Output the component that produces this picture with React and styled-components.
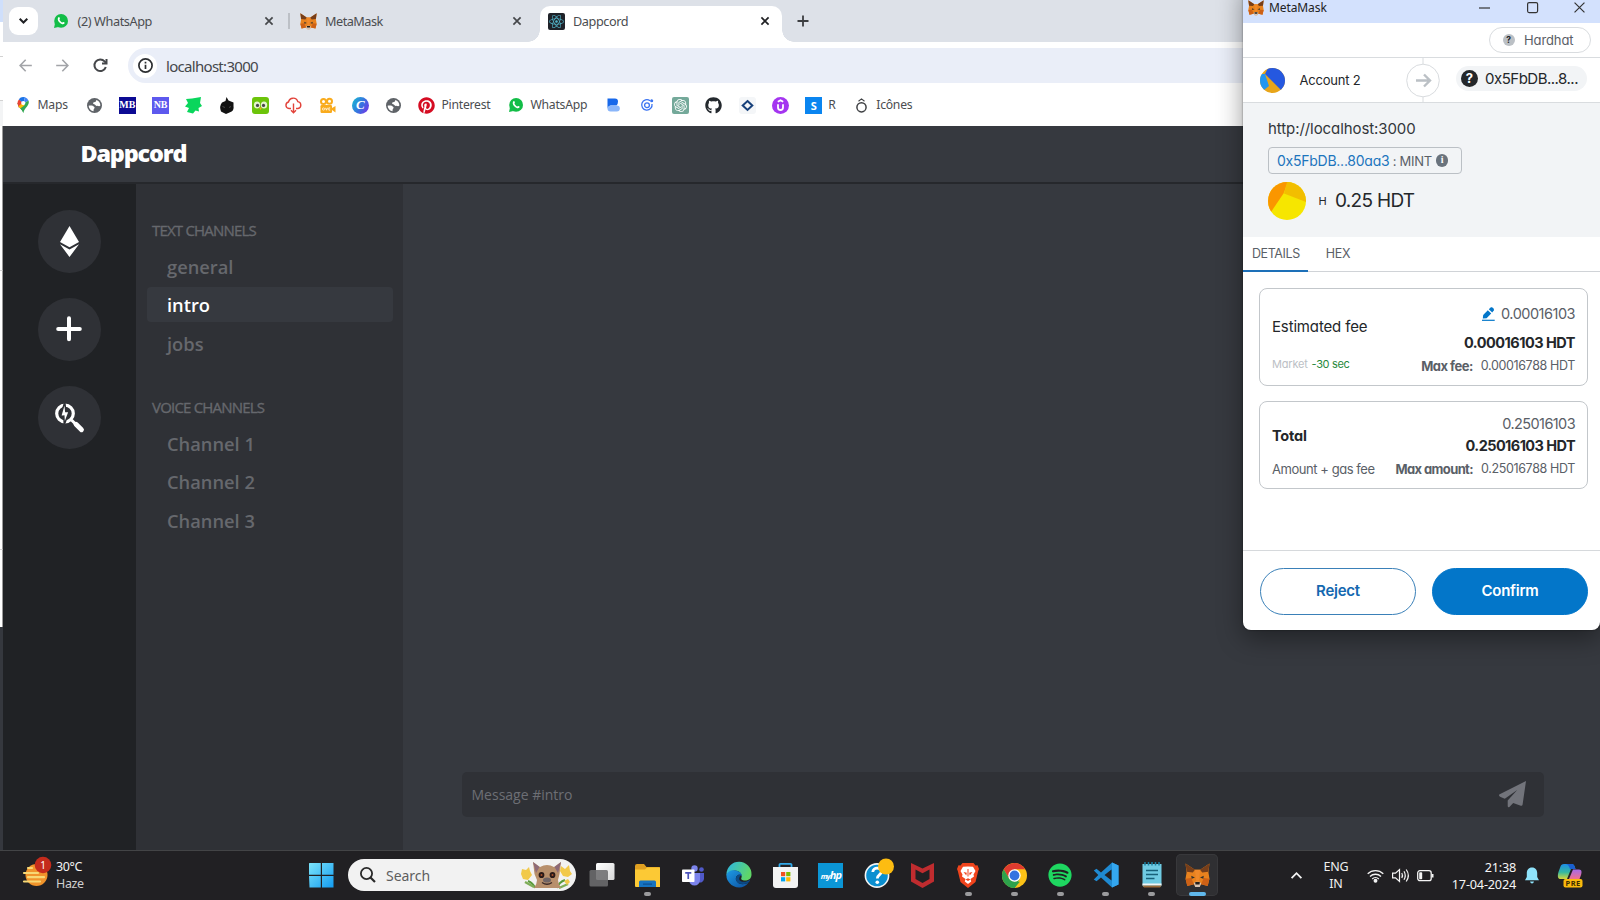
import React from "react";
import styled, { createGlobalStyle, css } from "styled-components";
import { FaPinterest, FaGithub, FaReact, FaSpotify } from "react-icons/fa";
import { SiOpenai } from "react-icons/si";

const segoe = '"Noto Sans", "Open Sans", sans-serif';
const euclid = 'Inter, "Liberation Sans", sans-serif';

const GlobalStyle = createGlobalStyle`
  *, *::before, *::after { box-sizing: border-box; }
  html, body { margin: 0; padding: 0; background: #202023; overflow: hidden; }
  svg { display: block; flex: none; overflow: visible; }
`;

const Desktop = styled.div`
  position: relative;
  width: 1600px;
  height: 900px;
  display: flex;
  flex-direction: column;
  overflow: hidden;
  font-family: ${segoe};
`;

const Workspace = styled.div`
  height: 851px;
  display: flex;
  border-bottom: 1px solid #434446;
`;

const BackWindow = styled.div`
  width: 3px;
  display: flex;
  flex-direction: column;
  background: #35383e;
`;

const BackSlice = styled.div`
  height: ${(p) => p.$h}px;
  background: ${(p) => p.$bg || "#fff"};
  border-bottom: ${(p) => (p.$line ? "1px solid #d2d2d2" : "0")};
  border-right: ${(p) => (p.$edge ? "1px solid #9a9a9a" : "0")};
`;

const Browser = styled.div`
  flex: 1;
  min-width: 0;
  display: flex;
  flex-direction: column;
  background: #fff;
`;

const Text = styled.span`
  white-space: pre;
  font-family: ${(p) => p.$font || "inherit"};
  font-size: ${(p) => p.$size || 13}px;
  font-weight: ${(p) => p.$weight || 400};
  letter-spacing: ${(p) => p.$ls || 0}px;
  line-height: ${(p) => p.$lh || 20}px;
  color: ${(p) => p.$color || "#4b4d50"};
`;

/* ---------- tab strip ---------- */

const TabStrip = styled.div`
  height: 42px;
  display: flex;
  background: #dde1e8;
`;

const TabSearch = styled.div`
  width: 29px;
  height: 28px;
  margin: 7px 0 0 6px;
  border-radius: 9px;
  background: #fff;
  display: flex;
  align-items: center;
  justify-content: center;
`;

const Tab = styled.div`
  width: ${(p) => p.$w}px;
  height: 36px;
  margin: 6px 0 0 ${(p) => p.$ml || 0}px;
  padding: 0 ${(p) => p.$pr}px 6px ${(p) => p.$pl}px;
  display: flex;
  align-items: center;
  gap: ${(p) => p.$gap || 8}px;
  position: relative;
  ${(p) =>
    p.$active &&
    css`
      background: #fff;
      border-radius: 10px 10px 0 0;
      &::before, &::after {
        content: "";
        position: absolute;
        bottom: 0;
        width: 12px;
        height: 12px;
      }
      &::before { left: -12px; background: radial-gradient(circle at 0 0, transparent 11.5px, #fff 12px); }
      &::after { right: -12px; background: radial-gradient(circle at 100% 0, transparent 11.5px, #fff 12px); }
    `}
`;

const TabTitle = styled(Text)`
  flex: 1;
`;

const TabDivider = styled.div`
  width: 2px;
  height: 16px;
  margin-top: 13px;
  background: #bcc0c6;
`;

const NewTab = styled.div`
  margin: 15px 0 0 15px;
`;

/* ---------- toolbar ---------- */

const Toolbar = styled.div`
  height: 46px;
  display: flex;
  align-items: flex-start;
  padding: 6px 0 0 16px;
`;

const NavButtons = styled.div`
  width: 109px;
  height: 35px;
  display: flex;
  align-items: center;
  gap: 24px;
`;

const Omnibox = styled.div`
  flex: 1;
  height: 35px;
  border-radius: 17.5px 0 0 17.5px;
  background: #eaeef8;
  display: flex;
  align-items: center;
  gap: 9px;
  padding-left: 5px;
`;

const SiteInfo = styled.div`
  width: 24px;
  height: 24px;
  border-radius: 50%;
  background: #fff;
  display: flex;
  align-items: center;
  justify-content: center;
`;

const Bookmarks = styled.div`
  height: 38px;
  display: flex;
  align-items: center;
  padding: 0 0 4px 11.5px;
`;

const Bookmark = styled.div`
  width: ${(p) => p.$w || 33.3}px;
  display: flex;
  align-items: center;
  gap: 6px;
`;

const BookmarkIcon = styled.div`
  width: 17px;
  height: 17px;
  flex: none;
  display: flex;
  align-items: center;
  justify-content: center;
`;

const Favicon = styled.div`
  width: 17px;
  height: 17px;
  border-radius: ${(p) => p.$r || 0}px;
  background: ${(p) => p.$bg};
  color: #fff;
  display: flex;
  align-items: center;
  justify-content: center;
  font: ${(p) => p.$font || `700 11px/17px ${segoe}`};
`;

/* ---------- chat app ---------- */

const ChatApp = styled.div`
  flex: 1;
  display: flex;
  flex-direction: column;
  background: #36393f;
`;

const ChatHeader = styled.div`
  height: 58px;
  padding: 10px 0 0 77.5px;
  border-bottom: 2px solid #26282c;
`;

const ChatBody = styled.div`
  flex: 1;
  display: flex;
`;

const Servers = styled.div`
  width: 133px;
  background: #202225;
  display: flex;
  flex-direction: column;
  align-items: center;
  gap: 25.4px;
  padding: 25.5px 0 0;
`;

const Server = styled.div`
  width: 63px;
  height: 63px;
  padding-right: 1px;
  border-radius: 50%;
  background: #2f3136;
  display: flex;
  align-items: center;
  justify-content: center;
`;

const Channels = styled.div`
  width: 267px;
  background: #2f3136;
  padding: 35.5px 10px 0 11px;
`;

const ChannelHeading = styled.div`
  height: 20px;
  padding-left: 5px;
  font: 400 15px/20px "Open Sans", sans-serif;
  letter-spacing: -0.8px;
  -webkit-text-stroke: 0.35px #66686d;
  color: #66686d;
  white-space: nowrap;
`;

const ChannelList = styled.div`
  display: flex;
  flex-direction: column;
  gap: 3.5px;
  margin: 9px 0 36px;
`;

const Channel = styled.div`
  height: 35px;
  padding-left: 20px;
  border-radius: 4px;
  background: ${(p) => (p.$active ? "#36393f" : "transparent")};
  color: ${(p) => (p.$active ? "#fff" : "#66686d")};
  font: 600 18.3px/36px "Open Sans", sans-serif;
`;

const Conversation = styled.div`
  flex: 1;
  display: flex;
  align-items: flex-end;
  padding: 0 56px 33px 59px;
`;

const MessageBox = styled.div`
  flex: 1;
  height: 45px;
  border-radius: 5px;
  background: #2f3136;
  display: flex;
  align-items: center;
  justify-content: space-between;
  padding: 0 18px 0 9.5px;
`;

/* ---------- wallet window ---------- */

const WalletShadow = styled.div`
  position: absolute;
  left: 1243px;
  top: -20px;
  width: 357px;
  height: 650px;
  border-radius: 8px;
  box-shadow: 0 8px 26px rgba(0, 0, 0, 0.4), 0 0 2px rgba(0, 0, 0, 0.5);
`;

const Wallet = styled.div`
  position: absolute;
  left: 1243px;
  top: 0;
  width: 357px;
  height: 630px;
  background: #fff;
  border-radius: 0 0 8px 8px;
  overflow: hidden;
  display: flex;
  flex-direction: column;
  font-family: ${euclid};
  font-feature-settings: "cv11";
`;

const WalletTitleBar = styled.div`
  height: 23px;
  background: #d3e1fd;
  display: flex;
  align-items: center;
  padding: 0 15px 8px 5px;
`;

const WalletTitle = styled(Text)`
  flex: 1;
  padding-left: 5px;
`;

const WindowButtons = styled.div`
  display: flex;
  align-items: center;
  gap: 36.5px;
`;

const NetworkRow = styled.div`
  height: 35px;
  border-bottom: 1px solid #d9dcdf;
  display: flex;
  justify-content: flex-end;
  padding: 4px 9px 0 0;
`;

const NetworkPill = styled.div`
  width: 102px;
  height: 26px;
  border: 1px solid #d9dcdf;
  border-radius: 13px;
  display: flex;
  align-items: center;
  gap: 9px;
  padding-left: 12.5px;
`;

const Question = styled.div`
  width: ${(p) => p.$s}px;
  height: ${(p) => p.$s}px;
  flex: none;
  border-radius: 50%;
  background: ${(p) => p.$bg};
  color: ${(p) => p.$fg};
  font: 700 ${(p) => p.$s - 4}px/${(p) => p.$s}px ${euclid};
  text-align: center;
`;

const AccountRow = styled.div`
  height: 45px;
  border-bottom: 1px solid #d9dcdf;
  display: flex;
  align-items: center;
  padding: 0 13px 0 17px;
`;

const AccountName = styled(Text)`
  width: 121.5px;
  padding-left: 14.5px;
`;

const RecipientPill = styled.div`
  width: 131px;
  height: 25px;
  flex: none;
  margin: 0 0 3px 16px;
  border-radius: 13px;
  background: #f2f4f6;
  display: flex;
  align-items: center;
  gap: 7px;
  padding-left: 5px;
`;

const Summary = styled.div`
  height: 134px;
  background: #f2f4f6;
  padding: 15px 0 0 25px;
`;

const Origin = styled.div`
  height: 29px;
`;

const ContractTag = styled.div`
  width: 194px;
  height: 27px;
  border: 1px solid #bbc0c5;
  border-radius: 4px;
  display: flex;
  align-items: center;
  padding-left: 8px;
`;

const InfoDot = styled.div`
  width: 12.5px;
  height: 12.5px;
  margin-left: 4px;
  border-radius: 50%;
  background: #6a737d;
  color: #fff;
  font: 700 10px/12.5px "Liberation Serif", serif;
  text-align: center;
`;

const Amount = styled.div`
  display: flex;
  align-items: center;
  margin-top: 8px;
`;

const TokenSymbol = styled(Text)`
  width: 29px;
  padding-left: 12.5px;
`;

const WalletTabs = styled.div`
  height: 35px;
  border-bottom: 1px solid #d0d3d7;
  display: flex;
`;

const WalletTab = styled.div`
  height: 35px;
  padding: 5px 8px 0 9px;
  margin-right: 9px;
  border-bottom: ${(p) => (p.$active ? "2px solid #1d70b8" : "0")};
`;

const Details = styled.div`
  height: 279px;
  padding: 15.5px 12px 0 16px;
  display: flex;
  flex-direction: column;
  gap: 15px;
  border-bottom: 1px solid #d6d9dc;
`;

const Card = styled.div`
  height: ${(p) => p.$h}px;
  border: 1px solid #c3c7cb;
  border-radius: 8px;
  padding: ${(p) => p.$top}px 12px 0;
  display: flex;
  justify-content: space-between;
`;

const CardColumn = styled.div`
  display: flex;
  flex-direction: column;
  align-items: ${(p) => (p.$end ? "flex-end" : "flex-start")};
  padding-top: ${(p) => p.$top || 0}px;
`;

const Line = styled.div`
  height: 20px;
  margin-top: ${(p) => p.$mt || 0}px;
  display: flex;
  align-items: center;
  gap: ${(p) => p.$gap || 0}px;
`;

const Actions = styled.div`
  flex: 1;
  display: flex;
  gap: 16px;
  padding: 16.5px 12px 0 17px;
`;

const Action = styled.div`
  flex: 1;
  height: 47px;
  border-radius: 24px;
  border: 1px solid ${(p) => (p.$primary ? "#0376c9" : "#3a80b8")};
  background: ${(p) => (p.$primary ? "#0376c9" : "#fff")};
  color: ${(p) => (p.$primary ? "#fff" : "#1468b0")};
  font: 600 15px/43px ${euclid};
  letter-spacing: -0.25px;
  text-align: center;
`;

/* ---------- taskbar ---------- */

const Taskbar = styled.div`
  height: 49px;
  background: #212023;
  display: flex;
  align-items: flex-start;
`;

const Weather = styled.div`
  width: 309px;
  height: 49px;
  display: flex;
  padding: 6px 0 0 23px;
  gap: 6px;
`;

const WeatherText = styled.div`
  display: flex;
  flex-direction: column;
  padding-top: 0.5px;
`;

const StartButton = styled.div`
  width: 39px;
  padding-top: 12px;
`;

const SearchBox = styled.div`
  width: 228px;
  height: 32px;
  margin: 8px 3px 0 0;
  border-radius: 16px;
  background: #f2f2f2;
  display: flex;
  align-items: center;
  padding: 0 4px 0 12px;
`;

const SearchLabel = styled(Text)`
  flex: 1;
  padding: 1px 0 0 10px;
`;

const Apps = styled.div`
  width: 647px;
  display: flex;
`;

const AppButton = styled.div`
  width: 42px;
  height: 42px;
  flex: none;
  margin: 3px 1.92px;
  border-radius: 5px;
  background: ${(p) => (p.$active ? "#2f2f32" : "transparent")};
  box-shadow: ${(p) => (p.$active ? "inset 0 0 0 1px #38383b" : "none")};
  display: flex;
  flex-direction: column;
  align-items: center;
  padding-top: 8px;
  gap: 4px;
`;

const AppIcon = styled.div`
  width: 26px;
  height: 26px;
  display: flex;
  align-items: center;
  justify-content: center;
`;

const Running = styled.div`
  width: ${(p) => (p.$active ? 17 : 7)}px;
  height: 3.5px;
  border-radius: 2px;
  background: ${(p) => (p.$active ? "#60b8ec" : "#9b9b9d")};
`;

const HpTile = styled.div`
  width: 25px;
  height: 25px;
  background: #0b96d6;
  color: #fff;
  font: italic 700 11px/24px "Open Sans", sans-serif;
  letter-spacing: -0.8px;
  text-align: center;
  small { font-size: 7.5px; }
`;

const Tray = styled.div`
  flex: 1;
  height: 49px;
  display: flex;
  align-items: center;
  padding-left: 58px;
`;

const TrayCell = styled.div`
  width: ${(p) => p.$w}px;
  flex: none;
  display: flex;
  flex-direction: column;
  align-items: ${(p) => p.$align || "center"};
`;

/* ---------- drawings ---------- */

const Svg = ({ w, h = w, box, children, ...rest }) => (
  <svg width={w} height={h} viewBox={box || `0 0 ${w} ${h}`} fill="none" {...rest}>
    {children}
  </svg>
);

const Fox = ({ s }) => (
  <Svg w={s} box="0 0 24 24">
    <path d="M0.5 0.5 9.5 6.5H14.5L23.5 0.5 22.5 9 23.5 15 21.8 22 15.5 20.5 13.5 23H10.5L8.5 20.5 2.2 22 0.5 15 1.5 9Z" fill="#e8821e" />
    <path d="M0.5 0.5 9.5 6.5 7.5 9 1.6 8.5ZM23.5 0.5 14.5 6.5 16.5 9 22.4 8.5Z" fill="#763e1a" />
    <path d="M0.5 15 6 14.5 8.5 20.5 2.2 22ZM23.5 15 18 14.5 15.5 20.5 21.8 22Z" fill="#cd6116" />
    <path d="M9.5 6.5H14.5L13.3 17H10.7Z" fill="#f0892a" />
    <path d="M6 12.3 9.6 14 6.4 15ZM18 12.3 14.4 14 17.6 15Z" fill="#33312f" />
    <path d="M8.5 19.5 10.3 18H13.7L15.5 19.5 14.2 23H9.8Z" fill="#d8c5b5" />
    <path d="M9.8 18.2H14.2L14 20.6H10Z" fill="#241f1c" />
  </Svg>
);

const Close = ({ s = 8, c = "#45474a", sw = 1.7 }) => (
  <Svg w={s} box="0 0 10 10" stroke={c} strokeWidth={(sw * 10) / s}>
    <path d="M0.5 0.5 9.5 9.5M9.5 0.5 0.5 9.5" />
  </Svg>
);

const WhatsAppMark = () => (
  <Svg w={14}>
    <circle cx="7.1" cy="6.9" r="6.9" fill="#12bd47" />
    <path d="M0 14 1 9.5 4.5 13Z" fill="#12bd47" />
    <path d="M4.3 3.4C5 2.7 5.5 3.2 5.9 4.5 6 5 5.3 5.3 5.5 5.8 6 6.9 7 7.9 8.1 8.4 8.6 8.6 8.9 7.8 9.3 8 10.7 8.5 11 8.9 10.4 9.6 9.4 10.8 7.3 10.3 5.5 8.5 3.7 6.8 3.2 4.6 4.3 3.4Z" fill="#fff" />
  </Svg>
);

const Globe = () => (
  <Svg w={15} box="0 0 16 16">
    <circle cx="8" cy="8" r="8" fill="#5f6368" />
    <path d="M1.7 8.3C4 7.8 6.5 8 8 9.8 8.6 11 7 11.5 7 12.7V14.2C4.3 13.9 1.9 11.5 1.7 8.3ZM9.8 2C12.6 2.7 14.3 5.2 14.3 8 12.9 9.6 12.2 8.3 10.6 8.4 9 8.2 9.3 7 7.7 6.6 5.6 6.2 6.5 4.5 8.3 4.3 9.5 4 9.8 3.3 9.8 2Z" fill="#fff" />
  </Svg>
);

const MapsPin = () => (
  <Svg w={12.5} h={16} box="0 0 14 18">
    <path d="M7 18C6.2 14 1 12 0.5 6.8L7 7Z" fill="#34a853" />
    <path d="M0.5 7A6.5 6.5 0 0 1 2.3 2.4L7 6.5 2 12Z" fill="#ea4335" />
    <path d="M2 2.6A6.5 6.5 0 0 1 9 0.4L7 7Z" fill="#1a73e8" />
    <path d="M9 0.4A6.5 6.5 0 0 1 12.9 4L7 8Z" fill="#4285f4" />
    <path d="M12.9 4C15 9 8.5 12 7 18 6.5 15.5 5 14.5 3.5 12.4L9 6.5Z" fill="#34a853" />
    <path d="M1.5 10.5 5 7.5 8.8 9 3.7 13Z" fill="#fbbc04" />
    <circle cx="7" cy="6.8" r="2.4" fill="#fff" />
  </Svg>
);

const GreenLeaf = () => (
  <Svg w={17}>
    <path d="M1 2 7 1.5 16 0 15 6 17 9 13.5 11 14 14.5 10.5 13.5 8 16.5 2 15 4 11 0 9.5 3 6Z" fill="#09d65c" />
  </Svg>
);

const BlackCat = () => (
  <Svg w={14} h={17}>
    <path d="M6.5 0 8.5 3.5 13.5 5.5V9Q14.5 14 9.5 15.5L6 17 1 14.5Q-1 9 2 5.5L5.5 4Z" fill="#121212" />
    <path d="M2.5 9.5 5 10.5M9 10.5 11 9.5" stroke="#555" strokeWidth="0.8" />
  </Svg>
);

const DuoOwl = () => (
  <Svg w={17}>
    <rect width="17" height="17" rx="3" fill="#6cc40a" />
    <ellipse cx="5" cy="8" rx="3.2" ry="3.6" fill="#e4f4cc" />
    <ellipse cx="12" cy="8" rx="3.2" ry="3.6" fill="#e4f4cc" />
    <circle cx="5.5" cy="8.4" r="1.6" fill="#47474b" />
    <circle cx="11.5" cy="8.4" r="1.6" fill="#47474b" />
    <path d="M7 10.5H10L8.5 13Z" fill="#f5a623" />
  </Svg>
);

const CloudDown = () => (
  <Svg w={17} stroke="#e2433a" strokeWidth="1.4">
    <path d="M6 11.5H4A3.3 3.3 0 0 1 3.5 5 4.8 4.8 0 0 1 12.8 4.600 3.5 3.500 0 0 1 13 11.5H11M8.500 6.500V15.500M6 13.200 8.500 15.700 11 13.200" />
  </Svg>
);

const Camera = () => (
  <Svg w={17}>
    <circle cx="4.5" cy="4.600" r="2.500" stroke="#f9ab1d" strokeWidth="2" />
    <circle cx="10.500" cy="4.200" r="2.500" stroke="#f9ab1d" strokeWidth="2" />
    <rect x="1.500" y="8" width="11.500" height="8" rx="1.200" fill="#f9ab1d" />
    <path d="M13 11 16.500 9V15.500L13 13Z" fill="#f9ab1d" />
    <circle cx="4.500" cy="12" r="1.100" stroke="#fff" strokeWidth="0.700" />
    <path d="M6.500 10.800 7.500 13.200 8.500 10.800M11.200 10.900H9.800V13.100H11.200" stroke="#fff" strokeWidth="0.800" />
  </Svg>
);

const BlueLetter = () => (
  <Svg w={13} h={14}>
    <path d="M0.500 0.500H8A3 3 0 0 1 11 3.500Q11 6 9.500 7.500H4Q1.500 7.500 0.500 10.500Z" fill="#1768ea" />
    <path d="M0.500 10.500Q1.500 7.500 4 7.500H9.800A3 3 0 0 1 9.800 13.500H3.500Q0.500 13.300 0.500 10.500Z" fill="#8ab6fa" />
  </Svg>
);

const BlueOrbit = () => (
  <Svg w={12} stroke="#3b74f2" strokeWidth="1.300">
    <path d="M9 1.700A5.200 5.200 0 1 0 11 5" />
    <circle cx="6" cy="6.200" r="2.400" />
    <circle cx="10.700" cy="1.700" r="0.900" fill="#3b74f2" />
  </Svg>
);

const NavyDiamond = () => (
  <Svg w={17}>
    <rect width="17" height="17" rx="3" fill="#f4f6f8" />
    <path d="M8.500 4 13.300 8.500 8.500 13 3.700 8.500Z" stroke="#17407a" strokeWidth="2" />
  </Svg>
);

const UdemyMark = () => (
  <Svg w={17}>
    <circle cx="8.500" cy="8.500" r="8.500" fill="#a435f0" />
    <path d="M5.800 4.800 8.500 3.200 11.200 4.800M6 7.300V10.500Q6 13 8.500 13T11 10.500V7.300" stroke="#fff" strokeWidth="1.800" />
  </Svg>
);

const IconesMark = () => (
  <Svg w={11} h={15} stroke="#3f4144" strokeWidth="1.500">
    <circle cx="5.500" cy="9.300" r="4.600" />
    <path d="M2.500 3.300 5.500 0.900 8.500 3.300" strokeWidth="1.100" />
  </Svg>
);

const Arrow = ({ flip }) => (
  <Svg w={13} box="0 0 14 14" stroke="#a2a4a8" strokeWidth="1.7">
    <path d={flip ? "M0.2 7H12.8M6.8 0.8 12.8 7 6.8 13.2" : "M13.8 7H1.2M7.2 0.8 1.2 7 7.2 13.2"} />
  </Svg>
);

const Reload = () => (
  <Svg w={15} stroke="#45474a" strokeWidth="2">
    <path d="M12.800 9A5.800 5.800 0 1 1 11.600 3.400L13 4.800" />
    <path d="M13.500 1V5.500H9" />
  </Svg>
);

const EthMark = () => (
  <Svg w={19} h={31}>
    <path d="M9.5 0 19 16 9.5 21.3 0 16Z" fill="#fff" />
    <path d="M0 18.3 9.5 23.6 19 18.3 9.5 31Z" fill="#fff" />
  </Svg>
);

const PlusMark = () => (
  <Svg w={26} stroke="#fff" strokeWidth="4" strokeLinecap="round">
    <path d="M13 2.200V23.200M2.200 12.900H23.800" />
  </Svg>
);

const SpotMark = () => (
  <Svg w={29}>
    <circle cx="10" cy="10.5" r="8.300" stroke="#fff" strokeWidth="3.2" />
    <path d="M9.800 -1 10.800 8.500 14.200 8.500 9.300 21.500 8.800 13 5.500 13.500Z" fill="#fff" stroke="#2f3136" strokeWidth="1.500" />
    <path d="M16.5 17 22 22.500" stroke="#fff" strokeWidth="3" />
    <path d="M21 21.300 26.500 26.800" stroke="#fff" strokeWidth="4.800" strokeLinecap="round" />
  </Svg>
);

const Plane = () => (
  <Svg w={27}>
    <path d="M27 0 0.2 13.600C-0.300 15 0.500 15.600 1.600 16L5.800 17.800 18.200 9 8.700 19.500V25.300C9 26.500 9.800 26.400 10.400 25.900L14.200 22 21.800 24.700C22.800 25 23.400 24.600 23.600 23.600Z" fill="#72747b" />
  </Svg>
);

const Pencil = () => (
  <Svg w={13} h={14}>
    <path d="M0.800 11.500 1.200 8 5.800 3.200 9.200 6.600 4.600 11.200Z" fill="#0376c9" />
    <path d="M6.800 2.200 8.600 0.600C10 -0.400 12.600 1.800 11.800 3.600L10.200 5.600Z" fill="#0376c9" />
    <path d="M0 13.300H12.700" stroke="#0376c9" strokeWidth="1.200" />
  </Svg>
);

const HazeIcon = () => (
  <Svg w={27} h={32}>
    <circle cx="13.500" cy="18" r="11" fill="#f0932b" />
    <path d="M5 11H9M1 16H15M5 20.200H21M1 24.500H17" stroke="#f7d774" strokeWidth="2.200" strokeLinecap="round" />
    <circle cx="20" cy="8" r="8.300" fill="#c42b1c" />
    <text x="20" y="11.500" fontSize="10" fill="#fff" textAnchor="middle" fontFamily="Noto Sans">1</text>
  </Svg>
);

const WindowsLogo = () => (
  <Svg w={25}>
    <defs>
      <linearGradient id="win" gradientUnits="userSpaceOnUse" x1="0" y1="0" x2="25" y2="25">
        <stop stopColor="#7de5fb" />
        <stop offset="1" stopColor="#109af0" />
      </linearGradient>
    </defs>
    <path d="M0.500 0H11.800V11.800H0V0.500ZM13 0H24.500V11.800H13ZM0 13H11.800V24.500H0.500ZM13 13H24.500V24.500H13Z" fill="url(#win)" />
  </Svg>
);

const Bat = () => (
  <Svg w={51} h={28}>
    <path d="M7 20Q12 22 14 27M44 19Q38 21 36 27" stroke="#5a9a3c" strokeWidth="2" />
    <path d="M4 21 13 26M47 23 38 27" stroke="#7fae58" strokeWidth="2.400" />
    <path d="M1 8 5 9 8 6 9 10 11 14 7 19 2 18 0 13Z" fill="#f2c94a" />
    <path d="M40 5 44 8 48 4 49 10 51 13 47 16 42 15 39 10ZM43 20 47 18 49 21 46 24Z" fill="#f2c94a" />
    <path d="M12 1 19 6Q26 2 33 6L40 1 38.500 13 37 19Q37 23 40 27H13Q16 23 16 19L13.500 13Z" fill="#b8906c" />
    <path d="M12 1 18.500 6 15 12ZM40 1 33.500 6 37 12Z" fill="#8d6a78" />
    <ellipse cx="20.500" cy="14" rx="2.900" ry="3.100" fill="#2a1a18" />
    <ellipse cx="31.500" cy="14" rx="2.900" ry="3.100" fill="#2a1a18" />
    <circle cx="20.500" cy="14" r="1" fill="#a8532e" />
    <circle cx="31.500" cy="14" r="1" fill="#a8532e" />
    <ellipse cx="26" cy="19" rx="4" ry="2.600" fill="#6f6465" />
    <path d="M21 21.500Q26 25 31 21.500" stroke="#3b2a28" strokeWidth="1.300" />
  </Svg>
);

const TaskView = () => (
  <Svg w={26} h={24}>
    <defs>
      <linearGradient id="task" x1="0" y1="0" x2="1" y2="1">
        <stop stopColor="#ffffff" />
        <stop offset="1" stopColor="#d8d8d8" />
      </linearGradient>
    </defs>
    <rect x="7" y="0" width="18.500" height="17" rx="1.500" fill="url(#task)" />
    <rect x="0.500" y="7" width="18.500" height="16.500" rx="1.500" fill="#6c6c6e" fillOpacity="0.880" />
  </Svg>
);

const Folder = () => (
  <Svg w={25} h={23}>
    <path d="M0 2A2 2 0 0 1 2 0H9L11.500 3H24A1 1 0 0 1 25 4V10H0Z" fill="#e0a021" />
    <path d="M0 5.500H10L12 3.500H25V23H1A1 1 0 0 1 0 22Z" fill="#fcc935" />
    <path d="M4 23V18A1.500 1.500 0 0 1 5.500 16.500H19.500A1.500 1.500 0 0 1 21 18V23Z" fill="#1673c0" />
    <rect x="8" y="19.500" width="9" height="1.200" fill="#0e4f8f" />
  </Svg>
);

const Teams = () => (
  <Svg w={23} h={21}>
    <circle cx="12.500" cy="3.500" r="3.200" fill="#7b83eb" />
    <circle cx="19.500" cy="4.500" r="2.300" fill="#5059c9" />
    <path d="M15 8H22V14A4 4 0 0 1 16 17Z" fill="#5059c9" />
    <path d="M7 8H18V15A5.500 5.500 0 0 1 7 15Z" fill="#7b83eb" />
    <rect x="0" y="4.500" width="12.500" height="12.500" rx="0.800" fill="#fff" />
    <path d="M3.200 7.800H9.300M6.250 7.800V14" stroke="#4b53bc" strokeWidth="1.700" />
  </Svg>
);

const Edge = () => (
  <Svg w={26}>
    <defs>
      <linearGradient id="edgeTop" x1="0" y1="0" x2="1" y2="0.400">
        <stop stopColor="#2bb5e8" />
        <stop offset="1" stopColor="#5fd668" />
      </linearGradient>
      <linearGradient id="edgeLow" x1="0" y1="0" x2="1" y2="1">
        <stop stopColor="#1d9be6" />
        <stop offset="1" stopColor="#0c4f9e" />
      </linearGradient>
    </defs>
    <path d="M0.500 12A12.500 12.500 0 0 1 25.500 12.500C25.500 17 22 18.500 19 18.500 16 18.500 14.500 17.500 15.500 15.500 17 11 11 7 6 9 3 10 1 12 0.500 14Z" fill="url(#edgeTop)" />
    <path d="M0.500 13C1.500 9 6 7.500 9.500 8.500 13 9 16 11 15.800 14 13 11 9 14 10 18 11.500 22.500 18 23.500 22.500 20.500 18 27.500 8 26.500 3.500 21 1.200 18.500 0.300 16 0.500 13Z" fill="url(#edgeLow)" />
    <path d="M10 18C11 21.500 16 23.800 22.500 20.500 23.300 19.600 24 18.500 24.300 17.400 21 20 17 20.500 14.500 19 12.500 17.500 12.800 15 15.500 13 13 11.500 9.300 14 10 18Z" fill="#0b4a86" />
  </Svg>
);

const Store = () => (
  <Svg w={25}>
    <path d="M6.500 5V1.800A1 1 0 0 1 7.500 0.800H17.500A1 1 0 0 1 18.500 1.800V5" stroke="#31a8e8" strokeWidth="1.800" />
    <path d="M0 4H25V22A3 3 0 0 1 22 25H3A3 3 0 0 1 0 22Z" fill="#f3f3f3" />
    <path d="M8 9H12.200V13.200H8Z" fill="#f25022" />
    <path d="M13.200 9H17.400V13.200H13.200Z" fill="#7fba00" />
    <path d="M8 14.200H12.200V18.400H8Z" fill="#00a4ef" />
    <path d="M13.200 14.200H17.400V18.400H13.200Z" fill="#ffb900" />
  </Svg>
);

const Help = () => (
  <Svg w={26}>
    <circle cx="13" cy="13.500" r="11.600" fill="#0b8fd0" stroke="#f4f4f4" strokeWidth="1.600" />
    <path d="M8.800 10C9 4.500 17.500 5 17.300 9.800 17 13 13.300 12.800 13.300 16.500" stroke="#fff" strokeWidth="2.800" />
    <circle cx="13.300" cy="20.300" r="1.800" fill="#fff" />
    <circle cx="22" cy="4.500" r="8" fill="#fdbc11" />
  </Svg>
);

const McAfee = () => (
  <Svg w={23} h={25}>
    <path d="M0 0 11.500 5.500 23 0V18.500L11.500 25 0 18.500ZM4.500 6.500V16L11.500 20 18.500 16V6.500L11.500 10.200Z" fill="#c02c2f" fillRule="evenodd" />
  </Svg>
);

const Brave = () => (
  <Svg w={22} h={25}>
    <path d="M5.500 0H16.500L18.500 2.500 20.500 2.200 22 6 21.200 8 18.500 19 11 25 3.500 19 0.800 8 0 6 1.500 2.200 3.500 2.500Z" fill="#f0441c" />
    <path d="M11 3.500 16 3.800 18.500 8 16.500 11.500 17 13.500 13.500 16 14.200 18.500 11 21 7.800 18.500 8.500 16 5 13.500 5.500 11.500 3.500 8 6 3.800Z" fill="#fff" />
    <path d="M6.500 9 9.800 9.800 9.300 12.500ZM15.500 9 12.200 9.800 12.700 12.500ZM8.500 16.500 11 15.300 13.500 16.500 11 18ZM10.500 6H11.500V13.500H10.500Z" fill="#f0441c" />
  </Svg>
);

const Chrome = () => (
  <Svg w={25}>
    <circle cx="12.500" cy="12.500" r="12.500" fill="#fbc116" />
    <path d="M1.700 6.200A12.500 12.500 0 0 1 23.300 6.200H12.500L7.100 15.600Z" fill="#df3b2f" />
    <path d="M1.700 6.200 7.100 15.600 12.500 18.700H17.900L12.500 25A12.500 12.500 0 0 1 1.700 6.200Z" fill="#2da24c" />
    <path d="M17.900 15.600 12.500 25 10 22 12.500 18.700Z" fill="#2da24c" />
    <circle cx="12.500" cy="12.500" r="6.200" fill="#fff" />
    <circle cx="12.500" cy="12.500" r="4.900" fill="#3473e0" />
  </Svg>
);

const Code = () => (
  <Svg w={26}>
    <path d="M19 0.500 25.500 3.500V22.500L19 25.500 8 15.500 3.500 19.200 0.800 17.500 5.300 13 0.800 8.500 3.500 6.800 8 10.500ZM18.500 7.500 11.500 13 18.500 18.500Z" fill="#1f8ad2" fillRule="evenodd" />
    <path d="M19 0.500 25.500 3.500V22.500L19 25.500Z" fill="#34a7f0" />
  </Svg>
);

const Notepad = () => (
  <Svg w={20} h={26}>
    <path d="M0.500 2H19.500V23A2 2 0 0 1 17.500 25H2.500A2 2 0 0 1 0.500 23Z" fill="#6fcbe3" />
    <path d="M0.500 21.500H19.500V23.500H0.500Z" fill="#f4f4f4" />
    <path d="M0.500 23.500H19.500L18 25.500H2Z" fill="#9a6a3a" />
    <path d="M4 8.500H16M4 12.500H16M4 16.500H12.500" stroke="#17617a" strokeWidth="1.500" />
    <path d="M3 0V3.500M6.500 0V3.500M10 0V3.500M13.500 0V3.500M17 0V3.500" stroke="#1b7fa0" strokeWidth="1.500" />
  </Svg>
);

const Wifi = () => (
  <Svg w={17} h={14} stroke="#f4f4f4" strokeWidth="1.300">
    <path d="M0.700 4.800A11 11 0 0 1 16.300 4.800M3 7.500A7.800 7.800 0 0 1 14 7.500M5.200 10A4.700 4.700 0 0 1 11.800 10" />
    <circle cx="8.500" cy="11.700" r="1.300" fill="#f4f4f4" />
  </Svg>
);

const Volume = () => (
  <Svg w={18} h={15} stroke="#f4f4f4" strokeWidth="1.200">
    <path d="M0.600 5.200H3.500L7.500 1.500V13.500L3.500 9.800H0.600Z" />
    <path d="M9.800 5Q11.200 7.500 9.800 10M12 3.200Q14.500 7.500 12 11.800M14.200 1.500Q18.500 7.500 14.200 13.500" />
  </Svg>
);

const Battery = () => (
  <Svg w={17} h={12}>
    <rect x="0.700" y="0.700" width="13.500" height="10" rx="2.200" stroke="#f4f4f4" strokeWidth="1.300" />
    <rect x="2.200" y="2.200" width="3" height="7" rx="0.800" fill="#f4f4f4" />
    <path d="M15.500 4V7.500" stroke="#f4f4f4" strokeWidth="2" />
  </Svg>
);

const Bell = () => (
  <Svg w={14} h={17}>
    <path d="M7 0.500C10.500 0.500 12.200 3 12.200 6V10L14 13.200H0L1.800 10V6C1.800 3 3.500 0.500 7 0.500Z" fill="#8fe3fb" />
    <path d="M5 14.500H9Q8.500 16.500 7 16.500T5 14.500Z" fill="#8fe3fb" />
  </Svg>
);

const Copilot = () => (
  <Svg w={26}>
    <defs>
      <linearGradient id="coA" x1="0" y1="0" x2="0" y2="1">
        <stop stopColor="#1d8fe8" />
        <stop offset="0.550" stopColor="#35b7a0" />
        <stop offset="1" stopColor="#d8d63a" />
      </linearGradient>
      <linearGradient id="coB" x1="0" y1="0" x2="0" y2="1">
        <stop stopColor="#a56be8" />
        <stop offset="1" stopColor="#f2708c" />
      </linearGradient>
    </defs>
    <path d="M7 1H15C17 1 18 4 18.500 6H14L10 16H3C0.500 16 0.500 12 1.500 9L3.500 3.500C4 2 5 1 7 1Z" fill="url(#coA)" />
    <path d="M9 1H15C17 1 18 4 18.500 6H13C12 3 11 1.500 9 1Z" fill="#1a5fd0" />
    <path d="M16 6.500H22C25 6.500 24.800 9.500 24 12L22.500 16H12Z" fill="url(#coB)" />
    <rect x="6.500" y="16" width="19" height="8.500" rx="2" fill="#fbb90c" />
    <text x="16.200" y="23" fontSize="7.500" fontWeight="700" fill="#3a2b00" textAnchor="middle" fontFamily="Noto Sans" letterSpacing="0.500">PRE</text>
  </Svg>
);

/* ---------- data ---------- */

const slab = 'normal 700 10px/16px "Liberation Serif", serif';

const bookmarks = [
  { icon: <MapsPin />, label: "Maps", w: 71 },
  { icon: <Globe /> },
  { icon: <Favicon $bg="#0c0a93" $font={slab}>MB</Favicon> },
  { icon: <Favicon $bg="#5d59ee" $font={slab}>NB</Favicon> },
  { icon: <GreenLeaf /> },
  { icon: <BlackCat /> },
  { icon: <DuoOwl /> },
  { icon: <CloudDown /> },
  { icon: <Camera /> },
  {
    icon: (
      <Favicon $r={9} $bg="linear-gradient(120deg,#13bfd0,#3b6fe0 55%,#7d2ae8)" $font='italic 700 13px/16px "Liberation Serif", serif'>
        C
      </Favicon>
    ),
  },
  { icon: <Globe /> },
  { icon: <FaPinterest size={17} color="#d50c22" />, label: "Pinterest", w: 89 },
  { icon: <WhatsAppMark />, label: "WhatsApp", w: 98 },
  { icon: <BlueLetter /> },
  { icon: <BlueOrbit /> },
  { icon: <Favicon $r={2} $bg="#74a99a"><SiOpenai size={13} /></Favicon> },
  { icon: <FaGithub size={17} color="#24292e" /> },
  { icon: <NavyDiamond /> },
  { icon: <UdemyMark /> },
  { icon: <Favicon $bg="#0a85f0">S</Favicon>, label: "R", w: 48 },
  { icon: <IconesMark />, label: "Icônes", w: 70 },
];

const apps = [
  { icon: <TaskView /> },
  { icon: <Folder />, running: true },
  { icon: <Teams /> },
  { icon: <Edge /> },
  { icon: <Store /> },
  { icon: <HpTile><small>my</small>hp</HpTile> },
  { icon: <Help /> },
  { icon: <McAfee /> },
  { icon: <Brave />, running: true },
  { icon: <Chrome />, running: true },
  { icon: <FaSpotify size={24} color="#1ed760" />, running: true },
  { icon: <Code />, running: true },
  { icon: <Notepad />, running: true },
  { icon: <Fox s={25} />, running: true, active: true },
];

const textChannels = ["general", "intro", "jobs"];
const voiceChannels = ["Channel 1", "Channel 2", "Channel 3"];

const dark = "#24272a";
const grey = "#5a6067";

function WalletWindow() {
  return (
    <Wallet>
      <WalletTitleBar>
        <Fox s={16} />
        <WalletTitle $font={segoe} $size={12} $ls={-0.1} $color="#222" $lh={15}>MetaMask</WalletTitle>
        <WindowButtons>
          <Svg w={11} h={2}><path d="M0 1H11" stroke="#333" strokeWidth="1.200" /></Svg>
          <Svg w={11}><rect x="0.600" y="0.600" width="10" height="10" rx="1.500" stroke="#333" strokeWidth="1.200" /></Svg>
          <Close s={11} c="#333" sw={1.2} />
        </WindowButtons>
      </WalletTitleBar>
      <NetworkRow>
        <NetworkPill>
          <Question $s={12.5} $bg="#bbc0c5" $fg="#24272a">?</Question>
          <Text $size={13} $ls={-0.1} $color={grey}>Hardhat</Text>
        </NetworkPill>
      </NetworkRow>
      <AccountRow>
        <Svg w={25}>
          <defs><clipPath id="acc"><circle cx="12.500" cy="12.500" r="12.500" /></clipPath></defs>
          <g clipPath="url(#acc)">
            <path d="M0 0H25V25H0Z" fill="#e8a51a" />
            <path d="M8 0H25V22L21 22 5 6Z" fill="#2558e0" />
            <path d="M0 6 5 6 9 18 4 22 0 20Z" fill="#2196f0" />
          </g>
        </Svg>
        <AccountName $size={13} $ls={-0.2} $color={dark}>Account 2</AccountName>
        <Svg w={34} h={44}>
          <path d="M17 0V6M17 39V44" stroke="#d9dcdf" />
          <circle cx="17" cy="22.500" r="16.300" fill="#fff" stroke="#d9dcdf" />
          <path d="M10 22.500H23.500M18 16.500 24 22.500 18 28.500" stroke="#bbc0c5" strokeWidth="2.400" />
        </Svg>
        <RecipientPill>
          <Question $s={17} $bg="#24272a" $fg="#fff">?</Question>
          <Text $size={15} $ls={-0.5} $color={dark}>0x5FbDB...8...</Text>
        </RecipientPill>
      </AccountRow>
      <Summary>
        <Origin><Text $size={15} $ls={-0.08} $color="#33373b">http://localhost:3000</Text></Origin>
        <ContractTag>
          <Text $size={14} $ls={-0.25} $color="#1d75bd">0x5FbDB...80aa3</Text>
          <Text $size={13} $ls={-0.3} $color={grey}> : MINT</Text>
          <InfoDot>i</InfoDot>
        </ContractTag>
        <Amount>
          <Svg w={38}>
            <defs><clipPath id="tok"><circle cx="19" cy="19" r="19" /></clipPath></defs>
            <g clipPath="url(#tok)">
              <path d="M0 0H38V38H0Z" fill="#f6e600" />
              <path d="M0 0H20L15.500 11.500 3 30H0Z" fill="#fa9600" />
              <path d="M19 0H38V20L16 11.500Z" fill="#f2be00" />
            </g>
          </Svg>
          <TokenSymbol $size={11} $color={dark}>H</TokenSymbol>
          <Text $size={19} $ls={-0.7} $color={dark}>0.25 HDT</Text>
        </Amount>
      </Summary>
      <WalletTabs>
        <WalletTab $active><Text $size={12.5} $ls={-0.4} $color={grey}>DETAILS</Text></WalletTab>
        <WalletTab><Text $size={12.5} $ls={-0.3} $color={grey}>HEX</Text></WalletTab>
      </WalletTabs>
      <Details>
        <Card $h={98} $top={15}>
          <CardColumn $top={13.5}>
            <Line><Text $size={15} $ls={-0.15} $color={dark}>Estimated fee</Text></Line>
            <Line $gap={4} $mt={17}>
              <Text $size={11} $ls={-0.2} $color="#bbc0c5">Market</Text>
              <Text $size={11} $ls={-0.35} $color="#28893c">-30 sec</Text>
            </Line>
          </CardColumn>
          <CardColumn $end>
            <Line $gap={6}><Pencil /><Text $size={14.5} $ls={-0.5} $color={grey}>0.00016103</Text></Line>
            <Line $mt={9.5}><Text $size={14.5} $weight={700} $ls={-0.5} $color={dark}>0.00016103 HDT</Text></Line>
            <Line $gap={8} $mt={3}>
              <Text $size={13} $weight={700} $ls={-0.5} $color={grey}>Max fee:</Text>
              <Text $size={12.5} $ls={-0.36} $color={grey}>0.00016788 HDT</Text>
            </Line>
          </CardColumn>
        </Card>
        <Card $h={88} $top={12}>
          <CardColumn $top={12}>
            <Line><Text $size={14.5} $weight={700} $ls={-0.2} $color={dark}>Total</Text></Line>
            <Line $mt={13}><Text $size={13} $ls={-0.45} $color={grey}>Amount + gas fee</Text></Line>
          </CardColumn>
          <CardColumn $end>
            <Line><Text $size={14.5} $ls={-0.6} $color={grey}>0.25016103</Text></Line>
            <Line $mt={2.5}><Text $size={14.5} $weight={700} $ls={-0.57} $color={dark}>0.25016103 HDT</Text></Line>
            <Line $gap={8} $mt={2.5}>
              <Text $size={13} $weight={700} $ls={-0.6} $color={grey}>Max amount:</Text>
              <Text $size={12.5} $ls={-0.36} $color={grey}>0.25016788 HDT</Text>
            </Line>
          </CardColumn>
        </Card>
      </Details>
      <Actions>
        <Action>Reject</Action>
        <Action $primary>Confirm</Action>
      </Actions>
    </Wallet>
  );
}

export default function App() {
  return (
    <Desktop>
      <GlobalStyle />
      <Workspace>
        <BackWindow>
          <BackSlice $h={22} $bg="#cfdffb" />
          <BackSlice $h={35} $line />
          <BackSlice $h={44} $line />
          <BackSlice $h={25} $bg="#f3f4f5" />
          <BackSlice $h={145} $line $edge />
          <BackSlice $h={279} $line $edge />
          <BackSlice $h={77} $edge />
        </BackWindow>
        <Browser>
          <TabStrip>
            <TabSearch>
              <Svg w={9} h={6} stroke="#202124" strokeWidth="2"><path d="M0.700 0.700 4.500 4.500 8.300 0.700" /></Svg>
            </TabSearch>
            <Tab $w={250} $pl={15.5} $pr={15} $gap={10}>
              <WhatsAppMark />
              <TabTitle $size={12.7} $ls={-0.4}>(2) WhatsApp</TabTitle>
              <Close />
            </Tab>
            <TabDivider />
            <Tab $w={242} $pl={10} $pr={11}>
              <Fox s={17} />
              <TabTitle $size={12.7} $ls={-0.5}>MetaMask</TabTitle>
              <Close />
            </Tab>
            <Tab $w={242} $ml={8} $pl={8} $pr={13} $active>
              <Favicon $r={2} $bg="#1f2229"><FaReact size={15} color="#53b4c9" /></Favicon>
              <TabTitle $size={12.7} $ls={-0.42}>Dappcord</TabTitle>
              <Close c="#202124" />
            </Tab>
            <NewTab>
              <Svg w={12} stroke="#3c3e41" strokeWidth="1.800"><path d="M6 0.500V11.500M0.500 6H11.500" /></Svg>
            </NewTab>
          </TabStrip>
          <Toolbar>
            <NavButtons>
              <Arrow />
              <Arrow flip />
              <Reload />
            </NavButtons>
            <Omnibox>
              <SiteInfo>
                <Svg w={15} stroke="#2c2e31" strokeWidth="1.700">
                  <circle cx="7.500" cy="7.500" r="6.600" />
                  <path d="M7.500 6.700V11M7.500 3.800V5.400" />
                </Svg>
              </SiteInfo>
              <Text $size={15} $ls={-0.7} $color="#45474b">localhost:3000</Text>
            </Omnibox>
          </Toolbar>
          <Bookmarks>
            {bookmarks.map((b, i) => (
              <Bookmark key={i} $w={b.w}>
                <BookmarkIcon>{b.icon}</BookmarkIcon>
                {b.label && <Text $size={12.2} $ls={-0.25}>{b.label}</Text>}
              </Bookmark>
            ))}
          </Bookmarks>
          <ChatApp>
            <ChatHeader>
              <Text $font='"Open Sans", sans-serif' $size={23.4} $weight={800} $ls={-1.2} $lh={35} $color="#fff">Dappcord</Text>
            </ChatHeader>
            <ChatBody>
              <Servers>
                <Server><EthMark /></Server>
                <Server><PlusMark /></Server>
                <Server><SpotMark /></Server>
              </Servers>
              <Channels>
                <ChannelHeading>TEXT CHANNELS</ChannelHeading>
                <ChannelList>
                  {textChannels.map((name) => (
                    <Channel key={name} $active={name === "intro"}>{name}</Channel>
                  ))}
                </ChannelList>
                <ChannelHeading>VOICE CHANNELS</ChannelHeading>
                <ChannelList>
                  {voiceChannels.map((name) => (
                    <Channel key={name}>{name}</Channel>
                  ))}
                </ChannelList>
              </Channels>
              <Conversation>
                <MessageBox>
                  <Text $font='"Open Sans", sans-serif' $size={14} $color="#6d6f75">Message #intro</Text>
                  <Plane />
                </MessageBox>
              </Conversation>
            </ChatBody>
          </ChatApp>
        </Browser>
      </Workspace>
      <WalletShadow />
      <WalletWindow />
      <Taskbar>
        <Weather>
          <HazeIcon />
          <WeatherText>
            <Text $size={12.5} $lh={17} $ls={-0.35} $color="#f5f5f5">30°C</Text>
            <Text $size={12.5} $lh={17} $ls={-0.35} $color="#cfcfcf">Haze</Text>
          </WeatherText>
        </Weather>
        <StartButton><WindowsLogo /></StartButton>
        <SearchBox>
          <Svg w={16} stroke="#2a2a2a" strokeWidth="1.800"><circle cx="6.500" cy="6.500" r="5.600" /><path d="M10.500 10.500 15 15" strokeWidth="2.200" /></Svg>
          <SearchLabel $size={14} $ls={-0.05} $color="#5e5e5e">Search</SearchLabel>
          <Bat />
        </SearchBox>
        <Apps>
          {apps.map((a, i) => (
            <AppButton key={i} $active={a.active}>
              <AppIcon>{a.icon}</AppIcon>
              {a.running && <Running $active={a.active} />}
            </AppButton>
          ))}
        </Apps>
        <Tray>
          <TrayCell $w={25}><Svg w={11} h={7} stroke="#f4f4f4" strokeWidth="1.800"><path d="M0.600 6.200 5.500 1.200 10.400 6.200" /></Svg></TrayCell>
          <TrayCell $w={54}>
            <Text $size={12.5} $lh={16.5} $ls={-0.2} $color="#f0f0f0">ENG</Text>
            <Text $size={12.5} $lh={16.5} $color="#f0f0f0">IN</Text>
          </TrayCell>
          <TrayCell $w={25}><Wifi /></TrayCell>
          <TrayCell $w={25}><Volume /></TrayCell>
          <TrayCell $w={25}><Battery /></TrayCell>
          <TrayCell $w={78} $align="flex-end">
            <Text $size={12.7} $lh={16.5} $ls={-0.25} $color="#f5f5f5">21:38</Text>
            <Text $size={12.7} $lh={16.5} $ls={-0.2} $color="#f5f5f5">17-04-2024</Text>
          </TrayCell>
          <TrayCell $w={32}><Bell /></TrayCell>
          <TrayCell $w={44}><Copilot /></TrayCell>
        </Tray>
      </Taskbar>
    </Desktop>
  );
}
